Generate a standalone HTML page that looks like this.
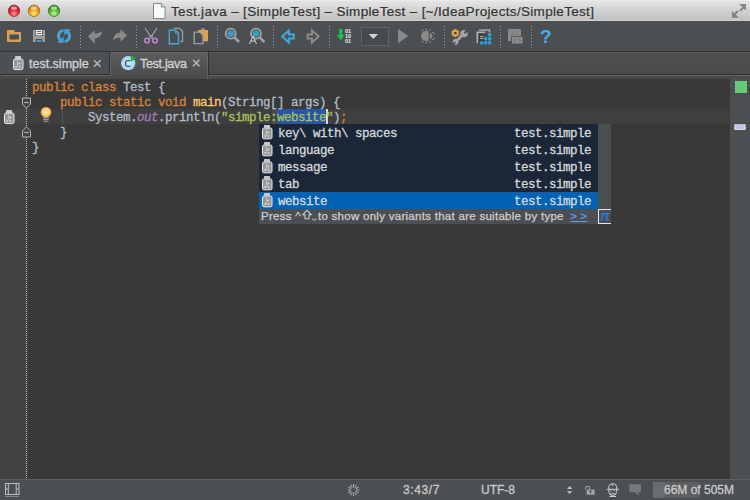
<!DOCTYPE html>
<html><head><meta charset="utf-8">
<style>
*{margin:0;padding:0;box-sizing:border-box}
html,body{width:750px;height:500px;overflow:hidden;background:#393939}
body{position:relative;font-family:"Liberation Sans",sans-serif}
.abs{position:absolute}
#title{left:0;top:0;width:750px;height:22px;background:linear-gradient(#f0f0f0 0,#e4e4e4 1px,#c0c0c0 20px,#d2d2d2 20px);border-bottom:1px solid #4a4d50}
.tl{position:absolute;top:5px;width:12px;height:12px;border-radius:50%}
#ttext{position:absolute;left:171px;top:4px;-webkit-text-stroke:0.2px;font-size:13.5px;letter-spacing:0.32px;color:#333;white-space:nowrap}
#toolbar{left:0;top:22px;width:750px;height:30px;background:#4b4f52;border-bottom:1px solid #2f3133}
.sep{position:absolute;top:26px;width:1px;height:22px;background:repeating-linear-gradient(#9a9d9f 0 1px,transparent 1px 3px)}
#tabs{left:0;top:52px;width:750px;height:27px;background:#4a4a4a}
#tabline{left:0;top:74px;width:750px;height:4px;background:linear-gradient(#2f3133 0 1px,#5b5e60 1px 2px,#4a4c4e 2px 4px)}
#gutter{left:0;top:79px;width:27px;height:400px;background:#404244}
#gdots{left:26px;top:79px;width:1px;height:400px;background:repeating-linear-gradient(#b9bbbd 0 1px,transparent 1px 2px)}
#editor{left:27px;top:79px;width:703px;height:400px;background:#393939}
#vscroll{left:730px;top:79px;width:20px;height:400px;background:#4b4f52}
#status{left:0;top:479px;width:750px;height:21px;background:#4b4f52;border-top:1px solid #5d6062}
.code{position:absolute;left:32px;-webkit-text-stroke:0.3px;font-family:"Liberation Mono",monospace;font-size:12.5px;letter-spacing:-0.5px;line-height:15px;white-space:pre;color:#b0bdca}
.kw{color:#d8843a}.fn{color:#ffc66d}.st{color:#a5c25c}.it{color:#a07cb8;font-style:italic}
#curline{left:0;top:109px;width:730px;height:15px;background:rgba(255,255,255,0.03)}
#popup{left:259px;top:124px;width:352px;height:100px;background:#1b2738}
.row{position:absolute;left:0;-webkit-text-stroke:0.3px;width:339px;height:17px;font-family:"Liberation Mono",monospace;font-size:12.5px;letter-spacing:-0.5px;line-height:17px;color:#d6d8da;white-space:pre}
.row .n{position:absolute;left:19px;top:2px}
.row .r{position:absolute;right:7px;top:2px}
.row.sel{background:#0262b6}
#pscroll{left:339px;top:0;width:13px;height:85px;background:#4b4f52}
#pfoot{left:0;top:85px;width:352px;height:15px;background:#4b4f52;font-size:11.5px;letter-spacing:0.28px;-webkit-text-stroke:0.25px;line-height:15px;color:#d0d0d0;white-space:nowrap}
.stxt{position:absolute;top:483px;font-size:12px;-webkit-text-stroke:0.3px;color:#c8cacc;white-space:nowrap}
.tabt{position:absolute;top:57px;font-size:12.5px;-webkit-text-stroke:0.35px;color:#d0d2d4;white-space:nowrap}
svg{position:absolute;left:0;top:0}
</style></head><body>
<div id="title" class="abs">
  <div id="ttext">Test.java – [SimpleTest] – SimpleTest – [~/IdeaProjects/SimpleTest]</div>
</div>
<div id="toolbar" class="abs"></div>
<div class="sep" style="left:80px"></div>
<div class="sep" style="left:136px"></div>
<div class="sep" style="left:217px"></div>
<div class="sep" style="left:273px"></div>
<div class="sep" style="left:329px"></div>
<div class="sep" style="left:444px"></div>
<div class="sep" style="left:500px"></div>
<div class="sep" style="left:531px"></div>
<div id="tabs" class="abs"></div>
<!-- tab 1 -->
<div class="abs" style="left:0;top:52px;width:109px;height:22px;background:#4c5053;box-shadow:1px 1px 0 #303234,2px 2px 0 #646464"></div>
<!-- tab 2 active -->
<div class="abs" style="left:111px;top:52px;width:96px;height:27px;background:linear-gradient(#5c5c5c,#4a4a4a);border-top:1px solid #6a6a6a;box-shadow:1px 0 0 #666"></div>
<div class="abs" style="left:208px;top:52px;width:1px;height:23px;background:#303234"></div>
<div class="abs" style="left:209px;top:52px;width:541px;height:22px;background:linear-gradient(#4f4f4f,#4a4a4b);border-top:1px solid #5a5a5a;box-shadow:0 1px 0 #303234,0 2px 0 #646464"></div>
<div class="tabt" style="left:29px">test.simple</div>
<div class="tabt" style="left:140px;letter-spacing:-0.3px">Test.java</div>
<div id="gutter" class="abs"></div>
<div id="editor" class="abs"></div>
<div id="curline" class="abs"></div>
<div id="gdots" class="abs"></div>
<div id="vscroll" class="abs"></div>
<div class="abs" style="left:277px;top:109px;width:49px;height:15px;background:#2a55a4"></div>
<div class="abs" style="left:272px;top:109px;width:5px;height:15px;background:#4a4b4c"></div>
<div class="abs" style="left:326px;top:109px;width:2px;height:15px;background:#d8d8d8"></div>
<div class="abs" style="left:62px;top:109px;width:1px;height:15px;background:#555"></div>
<div class="code" style="top:81px"><span class="kw">public class </span>Test {</div>
<div class="code" style="top:96px">    <span class="kw">public static void </span><span class="fn">main</span>(String[] args) {</div>
<div class="code" style="top:111px">        System.<span class="it">out</span>.println(<span class="st">"simple:website"</span>)<span class="kw">;</span></div>
<div class="code" style="top:126px">    }</div>
<div class="code" style="top:141px">}</div>
<div id="popup" class="abs">
  <div class="row" style="top:0"><span class="n">key\ with\ spaces</span><span class="r">test.simple</span></div>
  <div class="row" style="top:17px"><span class="n">language</span><span class="r">test.simple</span></div>
  <div class="row" style="top:34px"><span class="n">message</span><span class="r">test.simple</span></div>
  <div class="row" style="top:51px"><span class="n">tab</span><span class="r">test.simple</span></div>
  <div class="row sel" style="top:68px"><span class="n">website</span><span class="r">test.simple</span></div>
  <div id="pscroll" class="abs"></div>
  <div id="pfoot" class="abs" style="padding-left:2px">Press ^<svg style="position:static;display:inline-block;vertical-align:-1px" width="17" height="12" viewBox="0 0 16 12"><path d="M5.5 1.2l4.3 4.6h-2.3v4h-4v-4h-2.3z" fill="none" stroke="#d0d0d0" stroke-width="1.1"/><path d="M11.3 9.5v1.3h3v-1.3" fill="none" stroke="#c8c8c8" stroke-width="0.9"/></svg>to show only variants that are suitable by type <span style="color:#589df6;text-decoration:underline;margin-left:3px"><span style="letter-spacing:3.3px">&gt;</span>&gt;</span></div>
  <div class="abs" style="left:339px;top:85px;width:13px;height:15px;border:1px solid #e4e4e4;border-right:none"></div>
</div>
<div id="status" class="abs"></div>
<div class="stxt" style="left:403px;letter-spacing:0.6px">3:43/7</div>
<div class="stxt" style="left:481px">UTF-8</div>
<div class="abs" style="left:653px;top:482px;width:46px;height:16px;background:#5c5e60"></div>
<div class="abs" style="left:653px;top:482px;width:12px;height:16px;background:#6a6c6e"></div>
<div class="stxt" style="left:664px">66M of 505M</div>

<svg width="750" height="500" viewBox="0 0 750 500">
 <!-- traffic lights -->
 <defs>
  <radialGradient id="gr" cx="0.5" cy="0.75" r="0.6"><stop offset="0" stop-color="#ff9a9a"/><stop offset="0.55" stop-color="#e8323a"/><stop offset="1" stop-color="#b01820"/></radialGradient>
  <radialGradient id="go" cx="0.5" cy="0.75" r="0.6"><stop offset="0" stop-color="#ffec80"/><stop offset="0.55" stop-color="#f3ad22"/><stop offset="1" stop-color="#c87a10"/></radialGradient>
  <radialGradient id="gg" cx="0.5" cy="0.75" r="0.6"><stop offset="0" stop-color="#c8f4a0"/><stop offset="0.55" stop-color="#66c43a"/><stop offset="1" stop-color="#348a18"/></radialGradient>
 </defs>
 <circle cx="14" cy="10.8" r="5.7" fill="url(#gr)" stroke="#9a2a2a" stroke-width="0.8"/>
 <ellipse cx="14" cy="8" rx="3.2" ry="1.8" fill="#fff" opacity="0.55"/>
 <circle cx="34" cy="10.8" r="5.7" fill="url(#go)" stroke="#9a6a1a" stroke-width="0.8"/>
 <ellipse cx="34" cy="8" rx="3.2" ry="1.8" fill="#fff" opacity="0.55"/>
 <circle cx="54" cy="10.8" r="5.7" fill="url(#gg)" stroke="#3a7a2a" stroke-width="0.8"/>
 <ellipse cx="54" cy="8" rx="3.2" ry="1.8" fill="#fff" opacity="0.55"/>
 <!-- title doc icon -->
 <path d="M153.5 3.5h8l3.5 3.5v11.5h-11.5z" fill="#fafafa" stroke="#888" stroke-width="1"/>
 <path d="M161.5 3.5v3.5h3.5" fill="#ddd" stroke="#888" stroke-width="1"/>
 <!-- fullscreen -->
 <path d="M739 4.5h7v7l-2.2-2.2-3 3-1.6-1.6 3-3z" fill="#fff" opacity="0.7"/><path d="M739 4h7v7l-2.2-2.2-3 3-1.6-1.6 3-3z" fill="#858585"/>
 <path d="M739 18.5h-7v-7l2.2 2.2 3-3 1.6 1.6-3 3z" fill="#fff" opacity="0.7"/><path d="M739 18h-7v-7l2.2 2.2 3-3 1.6 1.6-3 3z" fill="#858585"/>
 <!-- folder -->
 <path d="M7 30h7l1 2h6v10h-14z" fill="#d9a050"/>
 <rect x="9.5" y="34.5" width="9.5" height="5" fill="#4b4f52"/>
 <!-- save -->
 <rect x="33" y="30" width="12" height="12" fill="#9c9c9c"/>
 <rect x="35" y="30" width="8" height="6" fill="#3c3e40"/>
 <rect x="35.7" y="30" width="6.6" height="5.4" fill="#f4f4f4"/>
 <rect x="36.8" y="31" width="4.4" height="0.9" fill="#555"/>
 <rect x="36.8" y="33" width="4.4" height="0.9" fill="#555"/>
 <rect x="35.8" y="39" width="6.4" height="3" fill="#3c3e40"/>
 <rect x="36.8" y="39.8" width="4.4" height="2" fill="#3fa6de"/>
 <!-- sync -->
 <path d="M63.3 30.4A5.6 5.6 0 0 0 60.2 39.9" fill="none" stroke="#45a5da" stroke-width="2.9"/>
 <path d="M57.1 42.8h6.5v-6.4z" fill="#45a5da"/>
 <path d="M64.7 41.6A5.6 5.6 0 0 0 67.8 32.1" fill="none" stroke="#45a5da" stroke-width="2.9"/>
 <path d="M70.9 29.2h-6.6v6.4z" fill="#45a5da"/>
 <!-- undo -->
 <path d="M88 36.2l6.7-6v3.3c3 0.2 5.5-0.5 7.2-2.7c0.3 4.5-3 7.5-7.2 7.7v5.5z" fill="#8a8a8a"/>
 <!-- redo -->
 <path d="M127 35.3l-6.5-6.1v3.4c-4 0-7.5 3.5-7.4 8.4c1.8-2.6 4.5-3.6 7.4-3.1v3.8z" fill="#8a8a8a"/>
 <!-- scissors -->
 <path d="M145 28l6 9M157 28l-6 9" stroke="#a8a8a8" stroke-width="1.1" fill="none"/>
 <rect x="149.8" y="36" width="2.5" height="2.5" fill="none" stroke="#b0b0b0" stroke-width="0.8"/>
 <circle cx="147" cy="40.6" r="2.3" fill="none" stroke="#c57fd6" stroke-width="1.6"/>
 <circle cx="155" cy="40.6" r="2.3" fill="none" stroke="#c57fd6" stroke-width="1.6"/>
 <!-- copy -->
 <path d="M173.5 28.3h6l3 3v10.2h-2" fill="none" stroke="#a0a0a0" stroke-width="1.3"/>
 <path d="M169.3 30.3h6.2l3 3v10.4h-9.2z" fill="#4b4f52" stroke="#4aa6d8" stroke-width="1.4"/>
 <path d="M175.5 30.3v3h3" fill="none" stroke="#4aa6d8" stroke-width="1"/>
 <!-- paste -->
 <path d="M198 30h10v11.3h-10z" fill="#dca04e"/>
 <rect x="201" y="28.5" width="4" height="1.2" fill="#a8a8a8"/>
 <path d="M194.2 32.2h5.8l3 3v8.5h-8.8z" fill="#4b4f52" stroke="#a0a0a0" stroke-width="1.3"/>
 <!-- find -->
 <circle cx="230.7" cy="33.7" r="5" fill="none" stroke="#a6a6a6" stroke-width="1.8"/>
 <circle cx="230.7" cy="33.7" r="3.3" fill="#3a9cc8"/>
 <path d="M234.5 37.5l4.5 4.5" stroke="#a0a0a0" stroke-width="2.6"/>
 <!-- replace -->
 <circle cx="256" cy="33.7" r="5" fill="none" stroke="#a6a6a6" stroke-width="1.8"/>
 <circle cx="256" cy="33.7" r="3.3" fill="#3a9cc8"/>
 <path d="M259.8 37.5l4.5 4.5" stroke="#a0a0a0" stroke-width="2.6"/>
 <path d="M249.5 44l3.5-8 3.5 8M251 41h4" stroke="#cfcfcf" stroke-width="1" fill="none"/>
 <!-- back -->
 <path d="M282.2 36.4l6.6-5.9v3.9h4.9v4.1h-4.9v3.9z" fill="none" stroke="#43a8de" stroke-width="2" stroke-linejoin="miter"/>
 <!-- forward -->
 <path d="M318.6 36.4l-6.6-5.9v3.9h-4.4v4.1h4.4v3.9z" fill="none" stroke="#8c8c8c" stroke-width="2"/>
 <!-- make -->
 <path d="M339.2 29h3v6h2.3l-3.8 5.2-3.8-5.2h2.3z" fill="#1fbf50"/>
 <text x="345" y="33.3" font-family="Liberation Sans" font-size="5.6" font-weight="bold" fill="#e8e8e8">01</text>
 <text x="345" y="38" font-family="Liberation Sans" font-size="5.6" font-weight="bold" fill="#e8e8e8">10</text>
 <text x="345" y="42.7" font-family="Liberation Sans" font-size="5.6" font-weight="bold" fill="#e8e8e8">01</text>
 <!-- dropdown -->
 <rect x="361.5" y="27.5" width="27" height="18" fill="#474a4d" stroke="#606365" stroke-width="1"/>
 <path d="M368.7 34h9.3l-4.65 5z" fill="#d4d4d4"/>
 <!-- run -->
 <path d="M398 29v14.2l10.5-7.1z" fill="#8a8a8a"/>
 <!-- debug -->
 <path d="M428.6 31h-2.6a5 5 0 0 0 0 10h2.6z" fill="#8a8a8a"/>
 <path d="M429.6 33.3a2.8 2.6 0 0 1 0 5.4z" fill="#8a8a8a"/>
 <path d="M431.8 32.2q2.4 0.2 3 2.2M431.8 39.8q2.4-0.2 3-2.2M423.2 31.2l-1.3-1.8M426.3 30.4v-1.8M429.4 30.8l1.3-1.8M423.2 40.8l-1.3 1.8M426.3 41.6v1.8M429.4 41.2l1.3 1.8" stroke="#8c8c8c" stroke-width="1.1" fill="none"/>
 <!-- settings -->
 <path d="M462 35.5l-6.5 6.5" stroke="#a6a6a6" stroke-width="2.7"/>
 <circle cx="464" cy="33.6" r="3.7" fill="#a6a6a6"/>
 <path d="M464.4 33.2l3.6-3.6" stroke="#4b4f52" stroke-width="2.2"/>
 <circle cx="455.6" cy="41.8" r="2.9" fill="#a6a6a6"/>
 <path d="M455.3 42.1l-3 3" stroke="#4b4f52" stroke-width="1.8"/>
 <path d="M455.3 29.3l3.3 1.9v3.8l-3.3 1.9-3.3-1.9v-3.8z" fill="#e0a048" stroke="#e0a048" stroke-width="0.8" stroke-linejoin="round"/>
 <rect x="454.2" y="32" width="2.3" height="2.2" fill="#3f4245"/>
 <!-- project structure -->
 <path d="M479 30h10.5v2.5" fill="none" stroke="#a6a6a6" stroke-width="1.6"/>
 <path d="M477.3 43v-10.8h8" fill="none" stroke="#b0b0b0" stroke-width="1.6"/>
 <rect x="479" y="34" width="5.5" height="8" fill="#3a3c3e"/>
 <rect x="480" y="36" width="3.5" height="0.9" fill="#c8c8c8"/>
 <rect x="480" y="38" width="3.5" height="0.9" fill="#c8c8c8"/>
 <g fill="#29a8e0">
  <rect x="488.2" y="33.3" width="3" height="3"/>
  <rect x="484.2" y="37.3" width="3" height="3"/><rect x="488.2" y="37.3" width="3" height="3"/>
  <rect x="480.2" y="41.3" width="3" height="3"/><rect x="484.2" y="41.3" width="3" height="3"/><rect x="488.2" y="41.3" width="3" height="3"/>
 </g>
 <!-- template -->
 <rect x="508" y="29" width="13" height="12" fill="#8a8a8a"/>
 <path d="M510 32h9M510 34.5h9" stroke="#6e6e6e" stroke-width="0.8" stroke-dasharray="1 1"/>
 <rect x="511.5" y="36.5" width="11.5" height="7.5" fill="#8c8c8c" stroke="#4b4f52" stroke-width="0.8"/>
 <path d="M516 38.1l-2.2 2.2 2.2 2.2M518.5 38.1l2.2 2.2-2.2 2.2" stroke="#666" stroke-width="0.9" fill="none"/>
 <!-- help -->
 <text x="540" y="43.2" font-family="Liberation Sans" font-size="19" font-weight="bold" fill="#47b0e2">?</text>

 <!-- tab1 jar -->
 <g transform="translate(13,55.6)">
  <rect x="2" y="0.5" width="6" height="2.8" rx="0.5" fill="#c8c8c8"/>
  <rect x="0.5" y="3.5" width="9.5" height="10.5" rx="1.5" fill="#96989a" stroke="#e8e8e8" stroke-width="1"/>
  <path d="M4.5 5v6" stroke="#c8c8c8" stroke-width="0.8"/><circle cx="6.2" cy="8" r="1" fill="#d8d8d8"/><circle cx="3.2" cy="11.3" r="0.9" fill="#d8d8d8"/><circle cx="6.6" cy="11.3" r="0.9" fill="#d8d8d8"/>
 </g>
 <!-- tab close -->
 <path d="M94 60.3l6.5 6.5M100.5 60.3l-6.5 6.5" stroke="#b8b8b8" stroke-width="1.5"/>
 <path d="M193 59.8l6.5 6.5M199.5 59.8l-6.5 6.5" stroke="#b8b8b8" stroke-width="1.5"/>
 <!-- C icon -->
 <defs><radialGradient id="gc"><stop offset="0" stop-color="#c8ecfc"/><stop offset="1" stop-color="#9fd6f4"/></radialGradient></defs><circle cx="128.2" cy="63.2" r="7.1" fill="url(#gc)"/>
 
 <path d="M130.3 60.8h-3.1a1.5 1.5 0 0 0-1.5 1.5v2.4a1.5 1.5 0 0 0 1.5 1.5h3.1" fill="none" stroke="#333" stroke-width="1.1"/>
 <path d="M130 56v-1l0 0z" fill="#fff"/>
 <path d="M130.8 55v6.8l5.2-3.4z" fill="#17b048"/>
 <!-- gutter jar -->
 <g transform="translate(4,109.6)">
  <rect x="2" y="0.5" width="6" height="2.8" rx="0.5" fill="#c8c8c8"/>
  <rect x="0.5" y="3.5" width="9.5" height="10.5" rx="1.5" fill="#96989a" stroke="#e8e8e8" stroke-width="1"/>
  <path d="M4.5 5v6" stroke="#c8c8c8" stroke-width="0.8"/><circle cx="6.2" cy="8" r="1" fill="#d8d8d8"/><circle cx="3.2" cy="11.3" r="0.9" fill="#d8d8d8"/><circle cx="6.6" cy="11.3" r="0.9" fill="#d8d8d8"/>
 </g>
 <!-- fold markers -->
 <path d="M22.5 98h8v6l-4 4.3-4-4.3z" fill="#404244" stroke="#b4b4b4" stroke-width="1"/>
 <path d="M24.3 102.5h4.4" stroke="#b4b4b4" stroke-width="1.2"/>
 <path d="M22.5 137h8v-6l-4-4.3-4 4.3z" fill="#404244" stroke="#b4b4b4" stroke-width="1"/>
 <path d="M24.3 132.5h4.4" stroke="#b4b4b4" stroke-width="1.2"/>
 <!-- lightbulb -->
 <defs><radialGradient id="bulb" cx="0.5" cy="0.45" r="0.55"><stop offset="0" stop-color="#ffe6a8"/><stop offset="0.6" stop-color="#ffc766"/><stop offset="1" stop-color="#eea040"/></radialGradient></defs>
 <circle cx="46" cy="112.3" r="5.3" fill="url(#bulb)"/>
 <path d="M43.6 111.3l1.2 2 1.2-1.6 1.2 1.6 1.2-2" stroke="#fff6d8" stroke-width="0.8" fill="none"/>
 <rect x="43.2" y="117.2" width="5.6" height="1.2" fill="#a8a8a8"/>
 <rect x="43.2" y="119" width="5.6" height="1.2" fill="#9a9a9a"/>
 <rect x="43.6" y="120.8" width="4.8" height="1.2" fill="#8a8a8a"/>
 <!-- popup jars -->
 <g id="pj">
  <rect x="264" y="125" width="6" height="2.8" rx="0.5" fill="#c8c8c8"/>
  <rect x="262.5" y="128" width="9.5" height="10.8" rx="1.5" fill="#96989a" stroke="#e8e8e8" stroke-width="1"/>
  <path d="M266.5 129.5v6.5" stroke="#c8c8c8" stroke-width="0.8"/><circle cx="268.2" cy="132.6" r="1" fill="#d8d8d8"/><circle cx="265.2" cy="136" r="0.9" fill="#d8d8d8"/><circle cx="268.6" cy="136" r="0.9" fill="#d8d8d8"/>
 </g>
 <use href="#pj" y="17"/><use href="#pj" y="34"/><use href="#pj" y="51"/><use href="#pj" y="68"/>

 <path d="M600.8 214.6q0.9-1.5 2.6-1.5h5.8v1.5h-1.7v4.2q0 0.9 0.9 0.9v1.1q-2.5 0.3-2.7-1.8v-4.4h-2.1q-0.4 3.6-2.1 6.2h-1.6q1.8-2.6 2.1-6.2q-0.7 0-1.2 0.6z" fill="#1b7fe0"/>
 <!-- right scroll markers -->
 <rect x="735" y="81" width="12" height="12" fill="#64cc74"/>
 <rect x="734.8" y="124.8" width="10.4" height="4.6" fill="#c4c0ee" stroke="#f0f0f0" stroke-width="0.8"/>

 <!-- status icons -->
 <rect x="5.5" y="483.5" width="13.5" height="11" fill="none" stroke="#c0c0c0" stroke-width="1"/>
 <path d="M8.3 483.5v11M16.2 483.5v11M5.5 489h2.8M16.2 489h2.8" stroke="#c0c0c0" stroke-width="1"/>
 <rect x="5" y="496" width="14" height="0.9" fill="#8a8a8a"/>
 <path d="M356.00 490.00L359.50 490.00M355.67 491.25L358.70 493.00M354.75 492.17L356.50 495.20M353.50 492.50L353.50 496.00M352.25 492.17L350.50 495.20M351.33 491.25L348.30 493.00M351.00 490.00L347.50 490.00M351.33 488.75L348.30 487.00M352.25 487.83L350.50 484.80M353.50 487.50L353.50 484.00M354.75 487.83L356.50 484.80M355.67 488.75L358.70 487.00" stroke="#a8a8a8" stroke-width="1.1"/>
 <path d="M567 489l2.65-2.9 2.65 2.9zM567 491.2l2.65 2.9 2.65-2.9z" fill="#c4c4c4"/>
 <path d="M585.5 489.5v-1.3a2 2 0 0 1 4 0v1.3" fill="none" stroke="#a4a4a4" stroke-width="1.1"/>
 <rect x="586.6" y="489.5" width="8" height="5.2" rx="0.8" fill="#a4a4a4"/>
 <path d="M589.3 491h2.6M590.6 491v2.5" stroke="#3c3e40" stroke-width="0.9"/>
 <g fill="none" stroke="#d0d0d0" stroke-width="1">
  <path d="M606.7 489.3h12.3M608.8 489v-2.8a4 3.2 0 0 1 7.8 0v2.8M612.7 484.5v1.8M608.8 490v1.5a3.9 4 0 0 0 7.8 0v-1.5M610 494.5q2.7-2.5 5.4 0M609.5 496.5h6.5"/>
 </g>
 <path d="M610.5 490.8h1.3M613.6 490.8h1.3" stroke="#d0d0d0" stroke-width="1"/>
 <path d="M629.3 484.3h11.7v8h-2.6v3.4l-3.2-3.4h-5.9z" fill="#76797c"/>
</svg>
</body></html>
